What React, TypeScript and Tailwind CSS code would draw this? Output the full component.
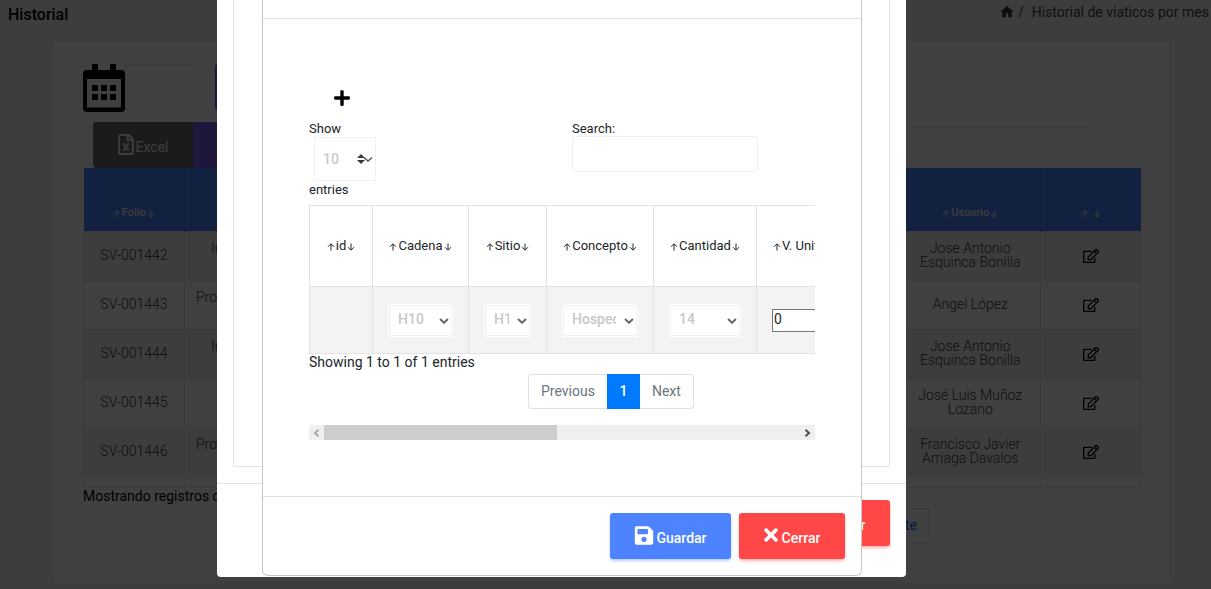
import React from "react";
import { FaPlus, FaRegEdit, FaRegFileExcel, FaSave, FaTimes } from "react-icons/fa";
import { MdHome } from "react-icons/md";

const records = [
  { folio: "SV-001442", project: "In", user: ["Jose Antonio", "Esquinca Bonilla"] },
  { folio: "SV-001443", project: "Pro", user: ["Angel López"] },
  { folio: "SV-001444", project: "In", user: ["Jose Antonio", "Esquinca Bonilla"] },
  { folio: "SV-001445", project: "", user: ["José Luis Muñoz", "Lozano"] },
  { folio: "SV-001446", project: "Pro", user: ["Francisco Javier", "Arriaga Davalos"] },
];

function Arrow({ down = false }: { down?: boolean }) {
  return (
    <svg
      viewBox="0 0 8 8"
      className="mt-0.5 h-2 w-2 shrink-0"
      fill="none"
      stroke="currentColor"
      aria-hidden="true"
    >
      <path d={down ? "M4 .5V7M1 4.2l3 3 3-3" : "M4 7.5V1M1 3.8l3-3 3 3"} />
    </svg>
  );
}

function Sortable({ label }: { label: string }) {
  return (
    <span className="inline-flex items-center gap-px whitespace-nowrap">
      <Arrow />
      {label || <span className="w-0.5" />}
      <Arrow down />
    </span>
  );
}

function CalendarIcon() {
  return (
    <svg viewBox="0 0 42 48" className="h-12 w-[42px]" aria-hidden="true">
      <path
        fillRule="evenodd"
        d="M9 0h6v6h12V0h6v6h5a4 4 0 0 1 4 4v34a4 4 0 0 1-4 4H4a4 4 0 0 1-4-4V10a4 4 0 0 1 4-4h5zM4 15v28.500h34V15z"
      />
      <path d="M9 21h6v6H9zM18 21h6v6h-6zM27 21h6v6h-6zM9 30h6v6H9zM18 30h6v6h-6zM27 30h6v6h-6z" />
    </svg>
  );
}

function CellSelect({ label, value }: { label: string; value: string }) {
  return (
    <div className="relative">
      <select
        aria-label={label}
        className="block h-[31px] w-full appearance-none border border-[#f1f1f1] bg-white pr-5 pb-0.5 pl-2 text-sm font-medium text-[#c9c8c8] outline outline-white"
      >
        <option>{value}</option>
      </select>
      <svg
        viewBox="0 0 10 6"
        className="pointer-events-none absolute top-[13px] right-[3px] h-1.5 w-2.5"
        fill="none"
        stroke="#666"
        strokeWidth="2"
        aria-hidden="true"
      >
        <path d="M1 1l4 3.700L9 1" />
      </svg>
    </div>
  );
}

function CloseButton() {
  return (
    <button
      type="button"
      className="flex h-[46px] w-[106px] items-center justify-center gap-0.5 rounded-[3px] bg-[#ff4747] pr-0.5 text-sm font-medium text-white shadow-[0_2px_3px_rgba(255,71,71,0.4)]"
    >
      <FaTimes className="mb-0.5 h-5 w-[18px]" />
      <span className="pt-1">Cerrar</span>
    </button>
  );
}

function HistoryPage() {
  return (
    <main className="min-h-screen bg-[#f3f3f3] pb-1.5">
      <header className="flex h-10 items-start justify-between pr-0.5 pl-2">
        <h1 className="pt-[3px] text-base leading-6 font-medium">Historial</h1>
        <nav className="flex items-center text-sm leading-6 text-[#444]">
          <a href="#inicio" aria-label="Inicio">
            <MdHome className="h-4 w-4 text-[#333]" />
          </a>
          <span className="pr-2 pl-[3px]">/</span>
          <span>Historial de viaticos por mes</span>
        </nav>
      </header>

      <section className="mr-10 ml-[52px] h-[543px] border border-[#f0f0f0] bg-white pr-[29px] pl-[30px] pt-[23px]">
        <div className="flex h-[58px] items-start">
          <CalendarIcon />
          <input aria-label="Fecha" className="h-[46px] w-[70px] border border-[#f3f3f3]" />
          <button
            type="button"
            aria-label="Buscar"
            className="ml-5 h-[46px] w-[100px] rounded-[3px] bg-[#7c58ec]"
          />
        </div>
        <div className="flex h-[46px] items-center justify-between pr-[54px] pl-2.5">
          <div className="flex h-full">
            <button
              type="button"
              className="flex w-[100px] items-center justify-center gap-0.5 rounded-l-[3px] bg-[#6e6e6e] text-sm text-[#eee]"
            >
              <FaRegFileExcel className="mb-0.5 h-[21px] w-4" />
              <span className="pt-1">Excel</span>
            </button>
            <button
              type="button"
              aria-label="Columnas"
              className="w-[100px] rounded-r-[3px] bg-[#7c58ec]"
            />
          </div>
          <input
            aria-label="Buscar registros"
            className="h-9 w-[240px] rounded-[3px] border border-[#f0f0f0]"
          />
        </div>
        <table className="w-full table-fixed border-collapse text-center text-sm leading-[14px] font-light text-[#3a3a42]">
          <thead>
            <tr className="h-[63px] bg-[#4d83ff] align-bottom text-[11px] text-[#eee]">
              <th className="w-[101px] border-r border-[#4478ee] pb-[9px] font-medium">
                <Sortable label="Folio" />
              </th>
              <th />
              <th className="w-[140px] pb-[9px] font-medium">
                <Sortable label="Usuario" />
              </th>
              <th className="w-[100px] border-l border-[#4478ee] pb-[9px] font-medium">
                <Sortable label="" />
              </th>
            </tr>
          </thead>
          <tbody>
            {records.map((r) => (
              <tr key={r.folio} className="h-[49px] odd:bg-[#f3f3f3]">
                <td className="border border-[#e6e6e6] pb-0.5">{r.folio}</td>
                <td className="border-y border-[#e6e6e6] pb-0.5 text-left">
                  <div className={r.project === "In" ? "h-7 pl-[26px]" : "h-7 pl-[11px]"}>{r.project}</div>
                </td>
                <td className="border-y border-[#e6e6e6] pb-0.5">
                  {r.user.map((line) => (
                    <div key={line}>{line}</div>
                  ))}
                </td>
                <td className="border border-[#e6e6e6]">
                  <button type="button" aria-label={"Editar " + r.folio} className="align-middle text-black">
                    <FaRegEdit className="h-4 w-4" />
                  </button>
                </td>
              </tr>
            ))}
          </tbody>
          <tfoot>
            <tr className="h-[11px]">
              <td className="border border-[#efefef]" />
              <td className="border-y border-[#efefef]" />
              <td className="border-y border-[#efefef]" />
              <td className="border border-[#efefef]" />
            </tr>
          </tfoot>
        </table>
        <p className="h-5 text-sm leading-4">Mostrando registros de</p>
        <div className="flex justify-end pr-[211px]">
          <button
            type="button"
            className="h-[35px] rounded-[3px] border border-[#dee2e6] px-3 text-sm text-[#007bff]"
          >
            Siguiente
          </button>
        </div>
      </section>
    </main>
  );
}

function ParentDialog() {
  return (
    <div className="absolute inset-x-0 top-0 flex justify-center pr-[88px]">
      <div role="dialog" aria-label="Historial" className="w-[689px] rounded-b bg-white">
        <div className="px-4 pb-4">
          <div className="h-[467px] border-x border-b border-[#e4e4e4]" />
        </div>
        <footer className="flex justify-end border-t border-[#dee2e6] px-4 pt-4 pb-[31px]">
          <CloseButton />
        </footer>
      </div>
    </div>
  );
}

function ItemsTable() {
  const head = "border border-[#e3e3e3] p-0 text-[13px] font-normal";
  const cell = "border border-[#e3e3e3] px-4 py-0";
  return (
    <table className="w-[640px] table-fixed border-collapse text-center text-[#212529]">
      <thead>
        <tr className="h-[81px]">
          <th className={head + " w-[63px]"}><Sortable label="id" /></th>
          <th className={head + " w-24"}><Sortable label="Cadena" /></th>
          <th className={head + " w-[78px]"}><Sortable label="Sitio" /></th>
          <th className={head + " w-[107px]"}><Sortable label="Concepto" /></th>
          <th className={head + " w-[103px]"}><Sortable label="Cantidad" /></th>
          <th className={head + " pl-4 text-left"}><Sortable label="V. Unitario" /></th>
        </tr>
      </thead>
      <tbody>
        <tr className="h-[67px] bg-[#f3f3f3]">
          <td className={cell} />
          <td className={cell}><CellSelect label="Cadena" value="H10" /></td>
          <td className={cell}><CellSelect label="Sitio" value="H10" /></td>
          <td className={cell}><CellSelect label="Concepto" value="Hospedaje" /></td>
          <td className={cell}><CellSelect label="Cantidad" value="14" /></td>
          <td className="border border-[#e3e3e3] px-[15px] py-0">
            <input
              aria-label="V. Unitario"
              defaultValue="0"
              className="block h-[23px] w-full border border-[#767676] bg-white px-px pb-0.5 text-sm"
            />
          </td>
        </tr>
      </tbody>
    </table>
  );
}

function ItemsDialog() {
  return (
    <div className="absolute inset-x-0 top-0 flex justify-center pr-[87px]">
      <div
        role="dialog"
        aria-label="Conceptos"
        className="w-[600px] rounded-b-md border-x border-b border-[#c4c4c4] bg-white text-[#212529]"
      >
        <div className="h-[19px] border-b border-[#e4e4e4]" />
        <div className="px-[46px] pt-[70px] pb-14">
          <button type="button" aria-label="Agregar" className="ml-6 block text-black">
            <FaPlus className="h-[18px] w-[18px]" />
          </button>

          <div className="mt-3 grid h-[86px] grid-cols-[263px_1fr] items-start text-[13px] leading-[18px]">
            <div>
              <label htmlFor="page-size" className="block h-[18px] leading-5">Show</label>
              <div className="relative ml-[5px] w-[62px]">
                <select
                  id="page-size"
                  className="block h-11 w-full appearance-none border border-[#f1f1f1] bg-white pl-2 text-sm font-medium text-[#c9c8c8]"
                >
                  <option>10</option>
                </select>
                <svg
                  viewBox="0 0 16 10"
                  className="pointer-events-none absolute top-[17px] right-[3px] h-2.5 w-4"
                  aria-hidden="true"
                >
                  <path d="M0 4l4-4 4 4zM0 6l4 4 4-4z" fill="#343a40" />
                  <path d="M7 3.500l4 3.500 4-3.500" fill="none" stroke="#555" strokeWidth="1.500" />
                </svg>
              </div>
              <span className="block">entries</span>
            </div>
            <div>
              <label htmlFor="search" className="block h-[17px] leading-5">Search:</label>
              <input
                id="search"
                type="search"
                className="block h-9 w-[186px] rounded-[3px] border border-[#f1f1f1] px-2"
              />
            </div>
          </div>

          <div className="overflow-hidden">
            <ItemsTable />
          </div>
          <p className="h-5 text-sm leading-4">Showing 1 to 1 of 1 entries</p>

          <div className="flex h-[35px] pl-[219px] text-sm text-[#6c757d]">
            <button type="button" className="rounded-l border border-r-0 border-[#dee2e6] px-3 pb-0.5">Previous</button>
            <button type="button" className="w-[33px] bg-[#007bff] pb-0.5 font-medium text-white">1</button>
            <button type="button" className="rounded-r border border-l-0 border-[#dee2e6] px-3 pb-0.5">Next</button>
          </div>

          <div className="mt-4 flex h-[15px] bg-[#efefef]">
            <button type="button" aria-label="Desplazar a la izquierda" className="flex w-[15px] items-center justify-center">
              <svg viewBox="0 0 7 8" className="h-2 w-[7px]" fill="none" stroke="#a8a8a8" strokeWidth="2">
                <path d="M5.500 .8L2 4l3.500 3.200" />
              </svg>
            </button>
            <div className="flex-1">
              <div className="h-full w-[49%] bg-[#cdcdcd]" />
            </div>
            <button type="button" aria-label="Desplazar a la derecha" className="flex w-[15px] items-center justify-center">
              <svg viewBox="0 0 7 8" className="h-2 w-[7px]" fill="none" stroke="#505050" strokeWidth="2">
                <path d="M1.500 .8L5 4 1.500 7.200" />
              </svg>
            </button>
          </div>
        </div>
        <footer className="flex justify-end gap-2 border-t border-[#dee2e6] p-4">
          <button
            type="button"
            className="flex h-[46px] w-[121px] items-center justify-center gap-0.5 rounded-[3px] bg-[#4d83ff] text-sm font-medium text-white shadow-[0_2px_3px_rgba(77,131,255,0.4)]"
          >
            <FaSave className="mb-0.5 h-[21px] w-5" />
            <span className="pt-1">Guardar</span>
          </button>
          <CloseButton />
        </footer>
      </div>
    </div>
  );
}

export default function App() {
  return (
    <div className="relative min-h-screen overflow-hidden font-['Roboto',sans-serif]">
      <HistoryPage />
      <div className="absolute inset-0 bg-black/75" />
      <ParentDialog />
      <ItemsDialog />
    </div>
  );
}
